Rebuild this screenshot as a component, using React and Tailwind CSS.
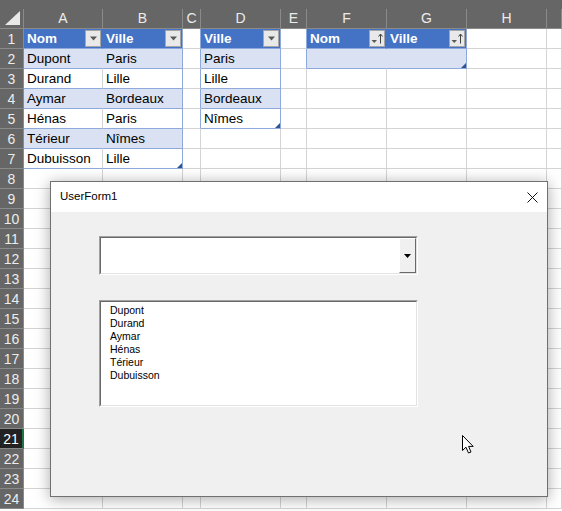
import React from "react";

const COLS = [
  { w: "w-[24px]", l: "" },
  { w: "w-[79px]", l: "A" },
  { w: "w-[80px]", l: "B" },
  { w: "w-[18px]", l: "C" },
  { w: "w-[80px]", l: "D" },
  { w: "w-[26px]", l: "E" },
  { w: "w-[80px]", l: "F" },
  { w: "w-[80px]", l: "G" },
  { w: "w-[80px]", l: "H" },
  { w: "w-[15px]", l: "" },
];

const DATA = {
  "1-1": "Nom", "1-2": "Ville",
  "2-1": "Dupont", "2-2": "Paris",
  "3-1": "Durand", "3-2": "Lille",
  "4-1": "Aymar", "4-2": "Bordeaux",
  "5-1": "Hénas", "5-2": "Paris",
  "6-1": "Térieur", "6-2": "Nîmes",
  "7-1": "Dubuisson", "7-2": "Lille",
  "1-4": "Ville", "2-4": "Paris", "3-4": "Lille", "4-4": "Bordeaux", "5-4": "Nîmes",
  "1-6": "Nom", "1-7": "Ville",
};

const TABLES = [
  { c0: 1, c1: 2, r1: 7, btn: "filter" },
  { c0: 4, c1: 4, r1: 5, btn: "filter" },
  { c0: 6, c1: 7, r1: 2, btn: "sort" },
];

function tableAt(r, c) {
  return TABLES.find((t) => c >= t.c0 && c <= t.c1 && r >= 1 && r <= t.r1);
}

function FilterBtn({ kind }) {
  return (
    <div className="w-[16px] h-[17px] shrink-0 bg-[#e9e9e9] border border-[#a6a6a6] flex items-center justify-center">
      {kind === "filter" ? (
        <svg width="9" height="5" viewBox="0 0 9 5">
          <path d="M1 0.5 L8 0.5 L4.5 4.5 Z" fill="#595959" />
        </svg>
      ) : (
        <svg width="14" height="15" viewBox="0 0 14 15">
          <path d="M1.5 9 L7 9 L4.25 12 Z" fill="#595959" />
          <path d="M10.5 3.5 L10.5 12.5" stroke="#404040" strokeWidth="1" />
          <path d="M8.5 5.5 L10.5 3 L12.5 5.5" stroke="#404040" strokeWidth="1" fill="none" />
        </svg>
      )}
    </div>
  );
}

function Cell({ r, c }) {
  const col = COLS[c];
  const t = tableAt(r, c);
  const text = DATA[`${r}-${c}`];
  let bg = "bg-white";
  let br = "border-r-[#d4d4d4]";
  let bb = "border-b-[#d4d4d4]";
  let txt = "text-black";
  if (t) {
    bb = "border-b-[#8ea9db]";
    if (r === 1) {
      bg = "bg-[#4472c4]";
      txt = "text-white font-bold";
      br = c === t.c1 ? "border-r-[#8ea9db]" : "border-r-[#4472c4]";
    } else if (r % 2 === 0) {
      bg = "bg-[#d9e1f2]";
      br = c === t.c1 ? "border-r-[#8ea9db]" : "border-r-[#d9e1f2]";
    } else {
      br = c === t.c1 ? "border-r-[#8ea9db]" : "border-r-[#d4d4d4]";
    }
  } else if (tableAt(r, c + 1)) {
    br = "border-r-[#8ea9db]";
  }
  const isLast = t && r === t.r1 && c === t.c1;
  return (
    <div
      className={`${col.w} h-[20px] shrink-0 border-r border-b ${bg} ${br} ${bb} ${txt} relative flex items-center justify-between pl-[3px] pr-[1px] text-[13.5px] leading-none overflow-hidden`}
    >
      <span className="whitespace-nowrap">{text || ""}</span>
      {t && r === 1 ? <FilterBtn kind={t.btn} /> : null}
      {isLast ? (
        <svg className="absolute right-0 bottom-0" width="5" height="5" viewBox="0 0 5 5">
          <path d="M5 0 L5 5 L0 5 Z" fill="#2f5597" />
        </svg>
      ) : null}
    </div>
  );
}

function RowHeader({ r }) {
  const sel = r === 21;
  return (
    <div
      className={`w-[24px] h-[20px] shrink-0 border-b border-b-[#8a8a8a] flex items-center justify-center text-[14px] leading-none ${
        sel
          ? "bg-[#222222] text-white border-r-2 border-r-[#217346]"
          : "bg-[#666666] text-[#ececec] border-r border-r-[#8a8a8a]"
      }`}
    >
      {r}
    </div>
  );
}

function Sunken({ className, children }) {
  return (
    <div className={`${className} border border-t-[#a0a0a0] border-l-[#a0a0a0] border-b-white border-r-white flex`}>
      <div className="flex-1 border border-t-[#696969] border-l-[#696969] border-b-[#e3e3e3] border-r-[#e3e3e3] bg-white flex">
        {children}
      </div>
    </div>
  );
}

export default function App() {
  const rows = [];
  for (let r = 1; r <= 24; r++) rows.push(r);
  return (
    <div className="relative w-[562px] h-[511px] overflow-hidden bg-white font-['Liberation_Sans',sans-serif]">
      {/* column header */}
      <div className="h-[29px] bg-[#666666] flex flex-col">
        <div className="h-[9px]" />
        <div className="h-[20px] flex border-b border-b-[#8a8a8a]">
          {COLS.map((col, i) => (
            <div
              key={i}
              className={`${col.w} shrink-0 border-r border-r-[#8a8a8a] flex items-center justify-center text-[14px] text-[#ececec] relative`}
            >
              {i === 0 ? (
                <svg className="absolute right-[3px] bottom-[3px]" width="15" height="14" viewBox="0 0 15 14">
                  <path d="M15 0 L15 14 L0 14 Z" fill="#e8e8e8" />
                </svg>
              ) : (
                col.l
              )}
            </div>
          ))}
        </div>
      </div>
      {rows.map((r) => (
        <div key={r} className="flex">
          <RowHeader r={r} />
          {COLS.slice(1).map((_, i) => (
            <Cell key={i} r={r} c={i + 1} />
          ))}
        </div>
      ))}

      {/* UserForm */}
      <div className="absolute left-[50px] top-[181px] w-[498px] h-[316px] border border-[#707070] bg-[#f0f0f0] shadow-[0_2px_14px_rgba(0,0,0,0.35)] flex flex-col">
        <div className="h-[30px] bg-white flex items-center justify-between pl-[9px] pr-[9px] shrink-0">
          <span className="text-[11.5px] text-black">UserForm1</span>
          <svg width="11" height="11" viewBox="0 0 11 11">
            <path d="M0.5 0.5 L10.5 10.5 M10.5 0.5 L0.5 10.5" stroke="#111" strokeWidth="1" />
          </svg>
        </div>
        <div className="flex-1 flex flex-col pl-[48px] pt-[24px] gap-[25px]">
          <Sunken className="w-[319px] h-[39px]">
            <div className="flex-1" />
            <div className="w-[17px] bg-[#f0f0f0] border border-t-white border-l-white border-b-[#696969] border-r-[#696969] flex items-center justify-center">
              <svg width="7" height="4" viewBox="0 0 7 4">
                <path d="M0 0 L7 0 L3.5 4 Z" fill="#000" />
              </svg>
            </div>
          </Sunken>
          <Sunken className="w-[319px] h-[107px]">
            <div className="flex flex-col pl-[9px] pt-[2px] text-[10.5px] leading-[13px] text-black">
              {["Dupont", "Durand", "Aymar", "Hénas", "Térieur", "Dubuisson"].map((n) => (
                <span key={n}>{n}</span>
              ))}
            </div>
          </Sunken>
        </div>
      </div>

      {/* mouse cursor */}
      <svg className="absolute left-[462px] top-[435px]" width="14" height="21" viewBox="0 0 14 21">
        <path
          d="M0.5 0.5 L0.5 15.5 L4 12.2 L6.5 18 L9 17 L6.6 11.4 L11.2 11.4 Z"
          fill="#fff"
          stroke="#000"
          strokeWidth="1"
          strokeLinejoin="round"
        />
      </svg>
    </div>
  );
}
